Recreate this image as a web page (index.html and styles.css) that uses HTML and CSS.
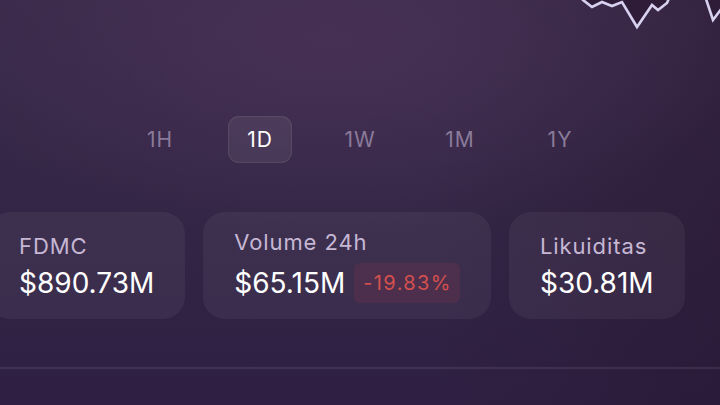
FILE: index.html
```html
<!DOCTYPE html>
<html>
  <head>
    <meta charset="utf-8" />
    <meta name="viewport" content="width=device-width, initial-scale=1.0" />
    <title>Token Stats</title>
    <link rel="stylesheet" href="styles.css">
  </head>
  <body>
    <div class="page">
      <!-- chart tail, the rest sits above the viewport -->
      <svg class="chart" width="720" height="32" viewBox="0 0 720 32">
        <path class="chart-fill" d="M583 0 L592 7 L602 2 L612 6 L622 2 L637 27 L652 5 L658 10 L667 3 L668 0 Z" />
        <path class="chart-fill" d="M707 0 L713 20 L720 10 L720 0 Z" />
        <polyline class="chart-line" points="578,-6 583,0 592,7 602,2 612,6 622,2 637,27 652,5 658,10 667,3 670,-4" />
        <polyline class="chart-line" points="705,-4 713,20 722,8" />
      </svg>

      <div class="ranges">
        <span class="range">1H</span>
        <span class="range active">1D</span>
        <span class="range">1W</span>
        <span class="range">1M</span>
        <span class="range">1Y</span>
      </div>

      <div class="stats">
        <div class="stat">
          <span class="label">FDMC</span>
          <div class="value-row"><span class="value">$890.73M</span></div>
        </div>
        <div class="stat">
          <span class="label">Volume 24h</span>
          <div class="value-row">
            <span class="value">$65.15M</span>
            <span class="change down">-19.83%</span>
          </div>
        </div>
        <div class="stat">
          <span class="label">Likuiditas</span>
          <div class="value-row"><span class="value">$30.81M</span></div>
        </div>
      </div>

      <div class="divider"></div>
    </div>
  </body>
</html>
```

FILE: styles.css
```css
html {
  width: 100%;
  height: 100%;
  padding: 0;
  margin: 0;
}
body {
  width: 100%;
  height: 100%;
  padding: 0;
  margin: 0;
  overflow: hidden;
  font-family: "Inter", "Noto Sans", sans-serif;
  color: #ffffff;
  background-color: #302243;
  background:
    radial-gradient(ellipse 420px 200px at 330px 40px, rgba(72, 50, 86, 0.9), rgba(72, 50, 86, 0) 100%),
    linear-gradient(90deg, rgba(0, 0, 0, 0) 60%, rgba(30, 10, 30, 0.25) 100%),
    linear-gradient(180deg, #3a2a4a 0%, #342646 45%, #2f2043 100%);
}
.page {
  display: flex;
  flex-direction: column;
  height: 405px;
}
.chart {
  display: block;
  flex: none;
}
.chart-fill {
  fill: #2f1c38;
}
.chart-line {
  fill: none;
  stroke: #d8d2f0;
  stroke-width: 2.6;
  stroke-linejoin: miter;
}

.ranges {
  display: flex;
  justify-content: center;
  gap: 36px;
  margin-top: 84px;
}
.range {
  width: 64px;
  height: 47px;
  box-sizing: border-box;
  display: flex;
  align-items: center;
  justify-content: center;
  font-size: 21px;
  letter-spacing: 1px;
  color: #8a7b9a;
  border-radius: 11px;
  border: 1px solid transparent;
}
.range.active {
  color: #ffffff;
  background: rgba(255, 255, 255, 0.07);
  border-color: rgba(255, 255, 255, 0.08);
}

.stats {
  display: flex;
  gap: 18px;
  margin-top: 49px;
  margin-left: -12px;
}
.stat {
  height: 107px;
  box-sizing: border-box;
  padding: 0 31px;
  display: flex;
  flex-direction: column;
  justify-content: center;
  gap: 8px;
  border-radius: 22px;
  background: rgba(255, 255, 255, 0.05);
}
.label {
  font-size: 22px;
  line-height: 26px;
  letter-spacing: 0.9px;
  color: #c6b7d4;
}
.value-row {
  display: flex;
  align-items: center;
  gap: 9px;
}
.value {
  font-size: 28px;
  line-height: 32px;
  color: #ffffff;
}
.change {
  height: 40px;
  padding: 0 8px 0 9px;
  display: flex;
  align-items: center;
  font-size: 20px;
  letter-spacing: 1.4px;
  border-radius: 6px;
}
.change.down {
  color: #d4504e;
  background: rgba(215, 60, 70, 0.11);
}

.divider {
  height: 2px;
  margin-top: 48px;
  background: rgba(255, 255, 255, 0.08);
}
```
